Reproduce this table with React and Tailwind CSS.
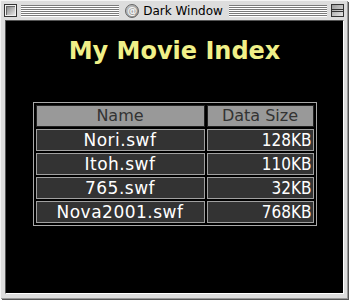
import React from 'react';

const rows = [
  ['Nori.swf', '128KB'],
  ['Itoh.swf', '110KB'],
  ['765.swf', '32KB'],
  ['Nova2001.swf', '768KB'],
];

const stripes =
  'flex-1 h-[12px] bg-[repeating-linear-gradient(to_bottom,#7a7a7a_0px,#7a7a7a_1px,#ffffff_1px,#ffffff_2px)]';

const App = () => {
  return (
    <div className="w-[349px] h-[300px] bg-white">
      <div className="w-[347px] h-[298px] bg-[#dddddd] flex flex-col shadow-[1px_1px_0_#999,2px_2px_0_#555] border-t border-l border-[#f4f4f4]">
        {/* title bar */}
        <div className="h-[19px] shrink-0 flex items-center pl-[3px] pr-[3px] gap-[4px]">
          <div className="w-[13px] h-[13px] border border-[#333] bg-[#f0f0f0] p-[1px]">
            <div className="w-full h-full bg-gradient-to-br from-[#8c8c8c] to-[#e6e6e6] border-t border-l border-[#666]" />
          </div>
          <div className={stripes} />
          <div className="flex items-center gap-[4px] px-[2px]">
            <div className="w-[14px] h-[14px] rounded-full border border-[#666] bg-gradient-to-br from-[#c8c8c8] to-[#8a8a8a] flex items-center justify-center text-[10px] leading-none text-[#f4f4f4] font-['DejaVu_Sans',sans-serif] font-bold">
              @
            </div>
            <span className="text-[12px] leading-[14px] text-black font-['DejaVu_Sans',sans-serif]">Dark Window</span>
          </div>
          <div className={stripes} />
          <div className="w-[13px] h-[13px] border border-[#333] bg-gradient-to-br from-[#9a9a9a] to-[#e6e6e6] flex flex-col">
            <div className="h-[5px] border-b border-[#333]" />
            <div className="h-[1px]" />
            <div className="flex-1 border-t border-[#333]" />
          </div>
        </div>

        {/* content */}
        <div className="flex-1 ml-[4px] mr-[3px] mb-[4px] bg-black border-t border-l border-[#555] border-r border-b border-r-white border-b-white flex flex-col items-center">
          <h1 className="mt-[16px] text-[24px] leading-[28px] font-bold text-[#f0f088] font-['DejaVu_Sans',sans-serif]">
            My Movie Index
          </h1>
          <table className="mt-[37px] border-separate border-spacing-[2px] border border-[#a8a8a8]">
            <thead>
              <tr>
                <th className="w-[169px] h-[22px] p-0 border border-[#222] bg-[#999999] text-[#333333] font-normal text-[16px] leading-[20px] text-center font-['DejaVu_Sans',sans-serif]">
                  Name
                </th>
                <th className="w-[107px] h-[22px] p-0 border border-[#222] bg-[#999999] text-[#333333] font-normal text-[16px] leading-[20px] text-center font-['DejaVu_Sans',sans-serif]">
                  Data Size
                </th>
              </tr>
            </thead>
            <tbody>
              {rows.map(([name, size]) => (
                <tr key={name}>
                  <td className="h-[22px] p-0 border border-[#a0a0a0] bg-[#333333] text-white text-[17px] leading-[20px] tracking-[0.5px] text-center font-['DejaVu_Sans',sans-serif]">
                    {name}
                  </td>
                  <td className="h-[22px] p-0 pr-[1px] border border-[#a0a0a0] bg-[#333333] text-white text-[17px] leading-[20px] text-right font-['Liberation_Sans_Narrow','DejaVu_Sans_Condensed',sans-serif]">
                    {size}
                  </td>
                </tr>
              ))}
            </tbody>
          </table>
        </div>
      </div>
    </div>
  );
};

export default App;
